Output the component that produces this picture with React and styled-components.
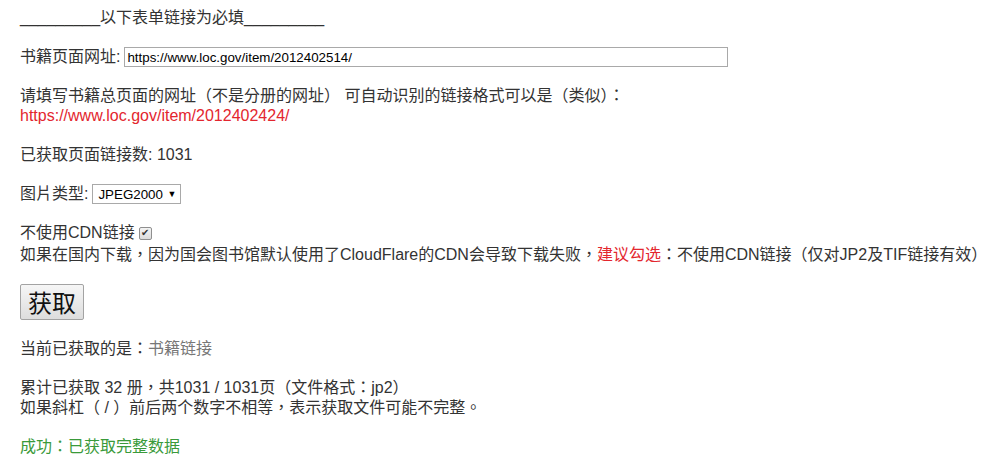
import React from "react";
import styled, { createGlobalStyle } from "styled-components";

const Global = createGlobalStyle`
  html, body { margin: 0; padding: 0; background: #fff; }
  body {
    font-family: "Liberation Sans", Arial, "Noto Sans CJK TC", "Noto Sans CJK SC", sans-serif;
    font-size: 16px;
    line-height: 20px;
    color: #333;
  }
`;

const Page = styled.div`
  padding: 8px 20px 0 20px;
  display: flex;
  flex-direction: column;
  gap: 19px;
  width: 990px;
  box-sizing: border-box;
`;

const Block = styled.div`
  margin: 0;
  white-space: nowrap;
`;

const Line = styled.div`
  display: flex;
  align-items: center;
  height: 20px;
  margin-top: ${(p) => p.$top || 0}px;
`;

const Tone = styled.span`
  color: ${(p) =>
    p.$tone === "red" ? "#e3262e" : p.$tone === "gray" ? "#777" : p.$tone === "green" ? "#3a9a3a" : "inherit"};
`;

const TextInput = styled.input`
  box-sizing: border-box;
  width: 604px;
  height: 20px;
  margin-left: 4px;
  padding: 0 2px;
  border: 1px solid #a9a9a9;
  font-family: "Liberation Sans", Arial, sans-serif;
  font-size: 13.33px;
  color: #000;
  outline: none;
`;

const SelectWrap = styled.span`
  position: relative;
  display: inline-block;
  margin-left: 4px;
`;

const Select = styled.select`
  appearance: none;
  box-sizing: border-box;
  width: 89px;
  height: 20px;
  padding: 0 12px 0 5px;
  border: 1px solid #a9a9a9;
  border-radius: 0;
  background: #fff;
  font-family: "Liberation Sans", Arial, sans-serif;
  font-size: 13.33px;
  color: #000;
  outline: none;
`;

const Arrow = styled.span`
  position: absolute;
  right: 5px;
  top: 4px;
  font-size: 9px;
  line-height: 12px;
  color: #000;
  pointer-events: none;
`;

const Check = styled.input`
  appearance: none;
  box-sizing: border-box;
  width: 13px;
  height: 13px;
  margin: 0 0 0 4px;
  border: 1px solid #8f8f8f;
  border-radius: 2px;
  background: linear-gradient(#f4f4f4, #dcdcdc);
  position: relative;
  &::after {
    content: "✔";
    position: absolute;
    left: 1px;
    top: -2px;
    font-size: 10px;
    line-height: 14px;
    color: #333;
  }
`;

const Button = styled.button`
  box-sizing: border-box;
  width: 64px;
  height: 36px;
  padding: 0;
  border: 1px solid #a3a3a3;
  border-radius: 2px;
  background: linear-gradient(#f6f6f6, #dddddd);
  font-family: "Noto Sans CJK SC", sans-serif;
  font-size: 24px;
  line-height: 30px;
  color: #111;
`;

export default function App() {
  return (
    <>
      <Global />
      <Page>
        <Block>
          <Line>_________以下表单链接为必填_________</Line>
        </Block>
        <Block>
          <Line>
            书籍页面网址:
            <TextInput defaultValue="https://www.loc.gov/item/2012402514/" />
          </Line>
        </Block>
        <Block>
          <Line>请填写书籍总页面的网址（不是分册的网址） 可自动识别的链接格式可以是（类似）：</Line>
          <Line>
            <Tone $tone="red">https://www.loc.gov/item/2012402424/</Tone>
          </Line>
        </Block>
        <Block>
          <Line>已获取页面链接数: 1031</Line>
        </Block>
        <Block>
          <Line>
            图片类型:
            <SelectWrap>
              <Select defaultValue="JPEG2000">
                <option>JPEG2000</option>
                <option>TIF</option>
                <option>JPG</option>
              </Select>
              <Arrow>▼</Arrow>
            </SelectWrap>
          </Line>
        </Block>
        <Block>
          <Line>
            不使用CDN链接
            <Check type="checkbox" defaultChecked />
          </Line>
          <Line $top={2}>
            如果在国内下载，因为国会图书馆默认使用了CloudFlare的CDN会导致下载失败，
            <Tone $tone="red">建议勾选</Tone>：不使用CDN链接（仅对JP2及TIF链接有效）
          </Line>
        </Block>
        <Block>
          <Button>获取</Button>
        </Block>
        <Block>
          <Line>
            当前已获取的是：<Tone $tone="gray">书籍链接</Tone>
          </Line>
        </Block>
        <Block>
          <Line>累计已获取 32 册，共1031 / 1031页（文件格式：jp2）</Line>
          <Line>如果斜杠（ / ）前后两个数字不相等，表示获取文件可能不完整。</Line>
        </Block>
        <Block>
          <Line>
            <Tone $tone="green">成功：已获取完整数据</Tone>
          </Line>
        </Block>
      </Page>
    </>
  );
}
